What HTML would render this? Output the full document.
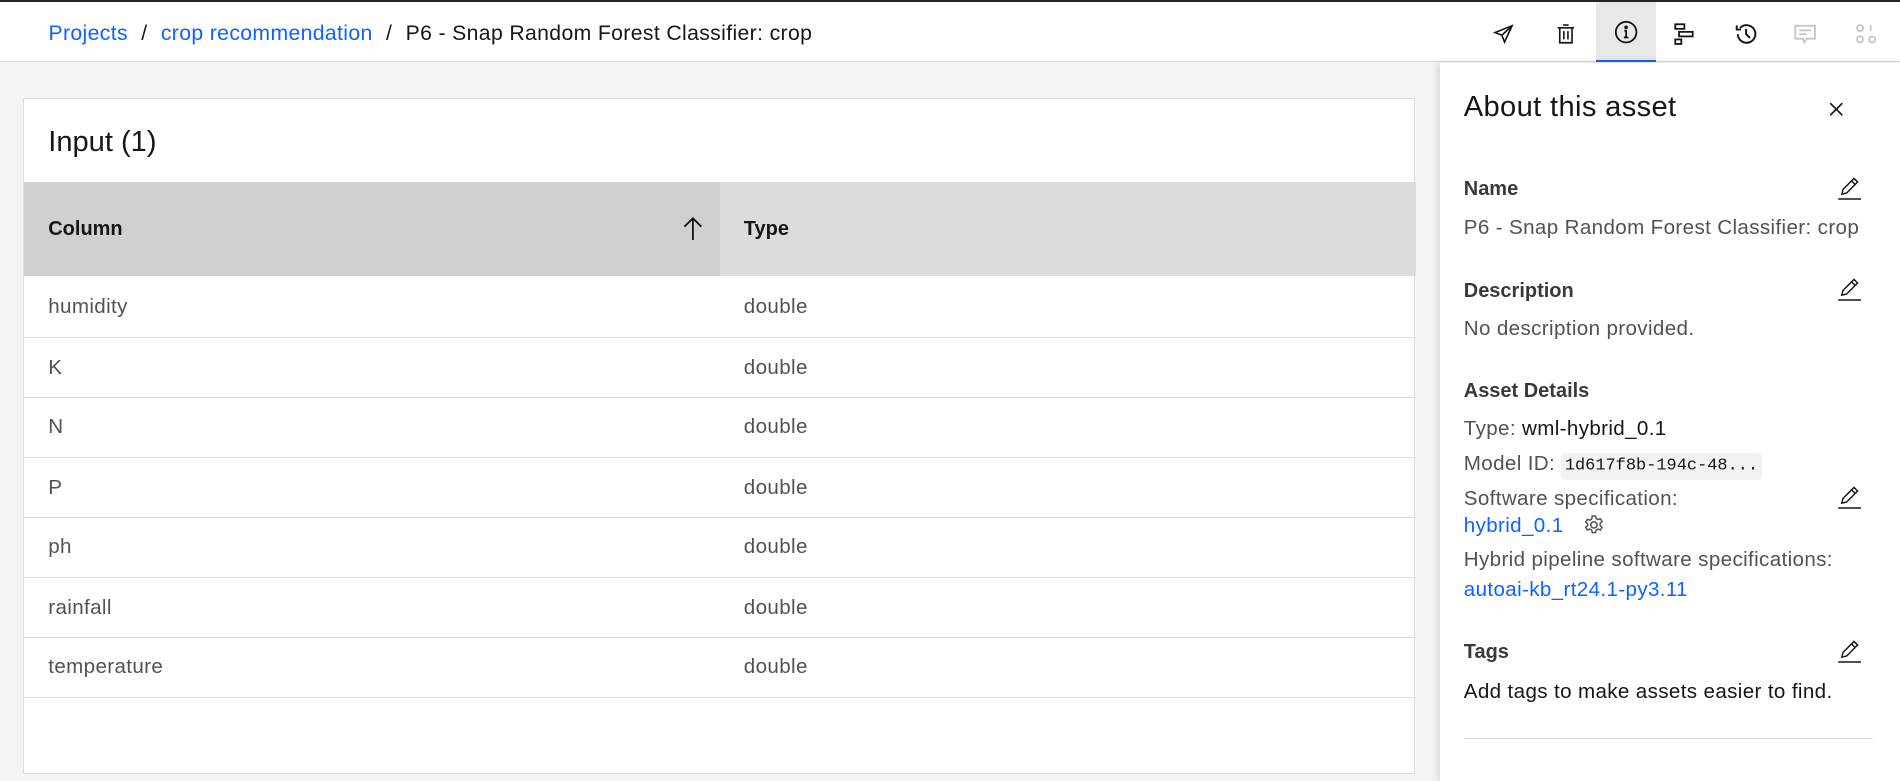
<!DOCTYPE html>
<html><head><meta charset="utf-8"><style>
html,body{margin:0;padding:0;width:1900px;height:781px;overflow:hidden;background:#f4f4f4}
#root{zoom:1.21173;width:1568px;height:645px;position:relative;font-family:"Liberation Sans",sans-serif;color:#161616}
.a{position:absolute;white-space:nowrap}
.hdr{position:absolute;left:0;top:0;width:1568px;height:51px;background:#fff;border-bottom:1px solid #e0e0e0;border-top:2px solid #262626;box-sizing:border-box}
.bc{left:40px;top:18px;font-size:17.5px;letter-spacing:.3px}
.bc .l{color:#0f62fe}
.bc .s{margin:0 11px}
.ic{position:absolute;top:4px;width:50px;height:48px;display:flex;align-items:center;justify-content:center}
.card{position:absolute;left:19px;top:81px;width:1149px;height:558px;background:#fff;border:1px solid #e0e0e0;box-sizing:border-box}
.row{position:absolute;left:0;width:1147px;height:49px;border-bottom:1px solid #e0e0e0;font-size:17px;letter-spacing:.3px;color:#525252}
.row span{position:absolute;top:15px}
.panel{position:absolute;left:1188px;top:52px;width:380px;height:593px;background:#fff;box-shadow:-2px 0 6px rgba(0,0,0,.12)}
.lbl{font-size:16.5px;font-weight:bold;color:#393939}
.val{font-size:17px;letter-spacing:.3px;color:#525252}
.pen{position:absolute;left:1516px}
</style></head><body><div id="root">
<div class="hdr"></div>
<div class="a bc"><span class="l">Projects</span><span class="s">/</span><span class="l">crop recommendation</span><span class="s">/</span><span>P6 - Snap Random Forest Classifier: crop</span></div>
<div class="ic" style="left:1216px"><svg width="18" height="18" viewBox="0 0 16 16" fill="none" stroke="#161616" stroke-width="1.2"><path d="M14 2L1.5 7l5 2 2 5z M6.5 9L14 2"/></svg></div>
<div class="ic" style="left:1267px"><svg width="18" height="18" viewBox="0 0 16 16" fill="none" stroke="#161616" stroke-width="1.2"><path d="M2 3.5h12 M6 1.5h4 M3.5 3.5v11h9v-11 M6.5 6v6 M9.5 6v6"/></svg></div>
<div class="ic" style="left:1317px;top:2px;height:49px;background:#e8e8e8;border-bottom:2px solid #0f62fe;box-sizing:border-box;padding-top:2px"><svg width="20" height="20" viewBox="0 0 16 16" fill="none" stroke="#161616" stroke-width="1.2"><circle cx="8" cy="8" r="6.8"/><path d="M6.5 11.5h3 M8 11.5V7H6.8"/><circle cx="8" cy="4.8" r=".6" fill="#161616"/></svg></div>
<div class="ic" style="left:1366px"><svg width="20" height="20" viewBox="0 0 16 16" fill="none" stroke="#161616" stroke-width="1.2"><rect x="1.5" y="1.5" width="6" height="3"/><rect x="4" y="6.5" width="9" height="3"/><rect x="1.5" y="11.5" width="4" height="3"/></svg></div>
<div class="ic" style="left:1416px"><svg width="20" height="20" viewBox="0 0 16 16" fill="none" stroke="#161616" stroke-width="1.3"><path d="M2.5 8A5.8 5.8 0 1 0 4 4 M1.8 2.2V5h2.8 M8 4.5V8l2.5 2.5"/></svg></div>
<div class="ic" style="left:1465px"><svg width="20" height="20" viewBox="0 0 16 16" fill="none" stroke="#c6c6c6" stroke-width="1.2"><path d="M1.5 2.5h13v8.5H9l-1.5 2.5-1-2.5h-5z M4 5.5h8 M4 8h5"/></svg></div>
<div class="ic" style="left:1515px"><svg width="20" height="20" viewBox="0 0 16 16" fill="none" stroke="#c6c6c6" stroke-width="1.2"><circle cx="4" cy="4" r="2"/><path d="M11 2v4"/><circle cx="4" cy="11.5" r="2"/><circle cx="12" cy="11.5" r="2"/></svg></div>

<div class="card">
 <div class="a" style="left:20px;top:22px;font-size:24px">Input (1)</div>
 <div class="a" style="left:0;top:68px;width:574px;height:78px;background:#d0d0d0"></div>
 <div class="a" style="left:574px;top:68px;width:575px;height:78px;background:#dcdcdc"></div>
 <div class="a" style="left:20px;top:98px;font-size:16.5px;font-weight:bold">Column</div>
 <div class="a" style="left:594px;top:98px;font-size:16.5px;font-weight:bold">Type</div>
 <svg class="a" style="left:543px;top:97px" width="18" height="20" viewBox="0 0 18 20" fill="none" stroke="#161616" stroke-width="1.5"><path d="M9 1v18 M2 8l7-7 7 7"/></svg>
 <div class="row" style="top:147px"><span style="left:20px">humidity</span><span style="left:594px">double</span></div>
 <div class="row" style="top:197px"><span style="left:20px">K</span><span style="left:594px">double</span></div>
 <div class="row" style="top:246px"><span style="left:20px">N</span><span style="left:594px">double</span></div>
 <div class="row" style="top:296px"><span style="left:20px">P</span><span style="left:594px">double</span></div>
 <div class="row" style="top:345px"><span style="left:20px">ph</span><span style="left:594px">double</span></div>
 <div class="row" style="top:395px"><span style="left:20px">rainfall</span><span style="left:594px">double</span></div>
 <div class="row" style="top:444px"><span style="left:20px">temperature</span><span style="left:594px">double</span></div>
</div>

<div class="panel"></div>
<div class="a" style="left:1208px;top:75px;font-size:24px;letter-spacing:.3px">About this asset</div>
<svg class="a" style="left:1509px;top:84px" width="12" height="12" viewBox="0 0 12 12" stroke="#161616" stroke-width="1.4"><path d="M1 1l10 10 M11 1L1 11"/></svg>
<div class="a lbl" style="left:1208px;top:147px">Name</div>
<div class="a val" style="left:1208px;top:178px">P6 - Snap Random Forest Classifier: crop</div>
<div class="a lbl" style="left:1208px;top:231px">Description</div>
<div class="a val" style="left:1208px;top:262px">No description provided.</div>
<div class="a lbl" style="left:1208px;top:314px">Asset Details</div>
<div class="a val" style="left:1208px;top:344px">Type: <span style="color:#161616">wml-hybrid_0.1</span></div>
<div class="a val" style="left:1208px;top:373px">Model ID: <span style="font-family:'Liberation Mono',monospace;font-size:14px;letter-spacing:0;color:#161616;background:#f2f2f2;padding:3px 3px;border-radius:4px">1d617f8b-194c-48...</span></div>
<div class="a val" style="left:1208px;top:402px">Software specification:</div>
<div class="a val" style="left:1208px;top:424px;color:#0f62fe">hybrid_0.1</div>
<svg class="a" style="left:1306px;top:424px" width="18" height="18" viewBox="0 0 16 16" fill="none" stroke="#525252" stroke-width="1.1"><circle cx="8" cy="8" r="2.3"/><path d="M6.8 1.5h2.4l.4 1.8 1.4.8 1.8-.6 1.2 2-1.4 1.3v1.6l1.4 1.3-1.2 2-1.8-.6-1.4.8-.4 1.8H6.8l-.4-1.8-1.4-.8-1.8.6-1.2-2 1.4-1.3V7.2L2 5.9l1.2-2 1.8.6 1.4-.8z"/></svg>
<div class="a val" style="left:1208px;top:452px">Hybrid pipeline software specifications:</div>
<div class="a val" style="left:1208px;top:477px;color:#0f62fe">autoai-kb_rt24.1-py3.11</div>
<div class="a lbl" style="left:1208px;top:529px">Tags</div>
<div class="a val" style="left:1208px;top:561px;color:#161616">Add tags to make assets easier to find.</div>
<div class="a" style="left:1208px;top:609px;width:338px;height:1px;background:#e0e0e0"></div>
<svg class="a pen" style="top:145px" width="20" height="20" viewBox="0 0 20 20" fill="none" stroke="#161616" stroke-width="1.2"><path d="M1 19h19 M4 15l1-4 9-9 3 3-9 9z M12 4l3 3"/></svg>
<svg class="a pen" style="top:229px" width="20" height="20" viewBox="0 0 20 20" fill="none" stroke="#161616" stroke-width="1.2"><path d="M1 19h19 M4 15l1-4 9-9 3 3-9 9z M12 4l3 3"/></svg>
<svg class="a pen" style="top:400px" width="20" height="20" viewBox="0 0 20 20" fill="none" stroke="#161616" stroke-width="1.2"><path d="M1 19h19 M4 15l1-4 9-9 3 3-9 9z M12 4l3 3"/></svg>
<svg class="a pen" style="top:527px" width="20" height="20" viewBox="0 0 20 20" fill="none" stroke="#161616" stroke-width="1.2"><path d="M1 19h19 M4 15l1-4 9-9 3 3-9 9z M12 4l3 3"/></svg>
</div></body></html>
